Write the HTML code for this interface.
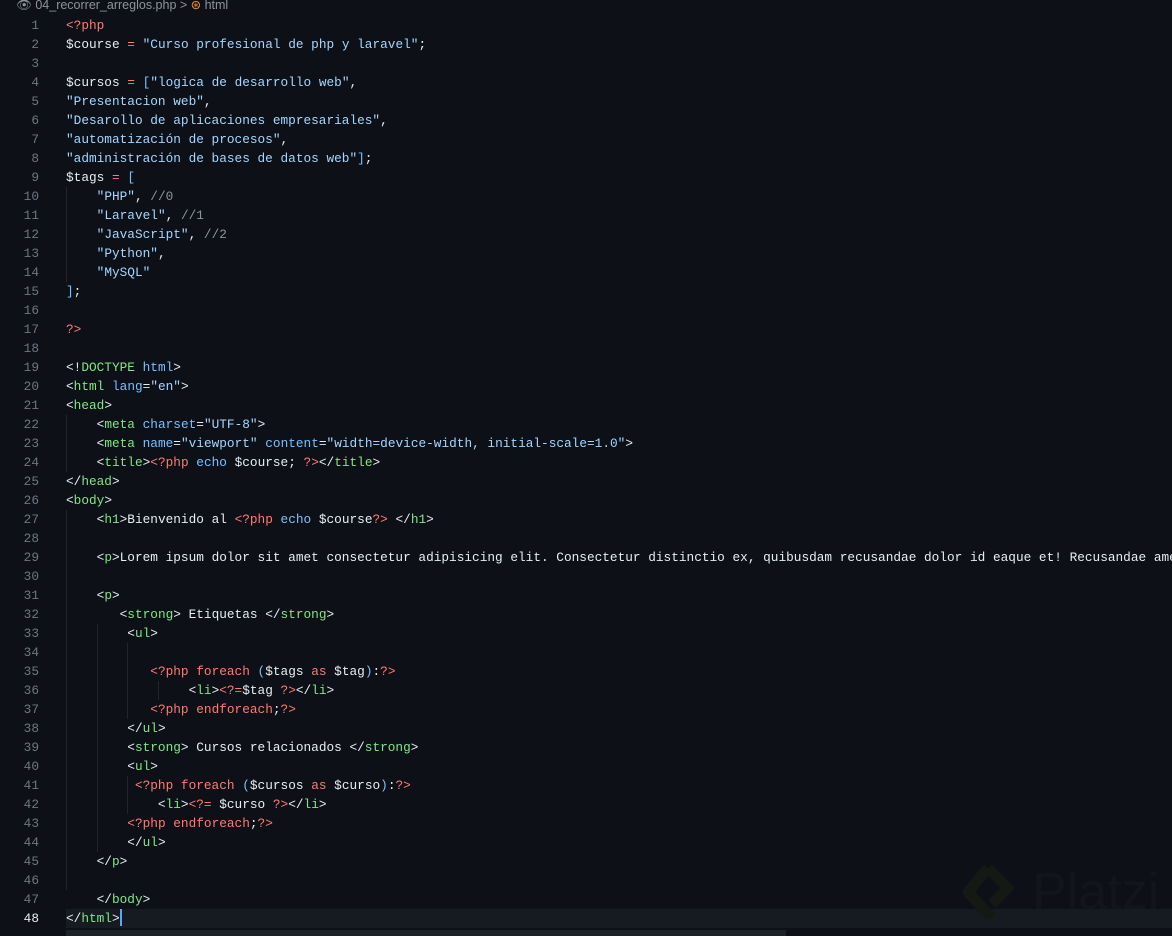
<!DOCTYPE html>
<html><head><style>
body{margin:0;background:#0d1117;width:1172px;height:936px;overflow:hidden;position:relative;font-family:"Liberation Mono",monospace;}
.hdr{position:absolute;left:16px;top:-3px;font-family:"Liberation Sans",sans-serif;font-size:12.5px;color:#8b949e;white-space:nowrap}
.code{position:absolute;left:0;top:15.5px;font-size:12.77px;line-height:19px;color:#e6edf3;white-space:pre}
.ln{display:inline-block;width:39px;text-align:right;color:#6e7681;margin-right:27px}
.cur .ln{color:#e6edf3}
.t{color:#7ee787}.s{color:#a5d6ff}.r{color:#ff7b72}.b{color:#79c0ff}.c{color:#8b949e}
.g{position:absolute;width:1px;background:#21262d}
</style></head><body>
<div class="hdr">👁 04_recorrer_arreglos.php &gt; <span style="color:#f0883e">⊛</span> html</div>
<div style="position:absolute;left:66px;top:909px;width:1106px;height:19px;background:#161b22"></div>
<div style="position:absolute;left:66px;top:930px;width:720px;height:6px;background:#1c2128"></div>
<div class="g" style="left:66px;top:187px;height:95px"></div>
<div class="g" style="left:66px;top:415px;height:57px"></div>
<div class="g" style="left:66px;top:510px;height:380px"></div>
<div class="g" style="left:97px;top:624px;height:228px"></div>
<div class="g" style="left:127px;top:643px;height:76px"></div>
<div class="g" style="left:127px;top:776px;height:38px"></div>
<div class="g" style="left:158px;top:681px;height:19px"></div>
<svg style="position:absolute;left:962px;top:862px" width="52" height="64" viewBox="0 0 52 64"><path d="M26 6 L46 26 L30 42 M26 6 L6 30 L26 52 L30 48" stroke="#141914" stroke-width="11" fill="none" stroke-linejoin="round"/></svg>
<div style="position:absolute;left:1032px;top:862px;font-family:'Liberation Sans',sans-serif;font-size:52px;color:#12161b">Platzi</div>
<div class="code"><div><span class="ln">1</span><span class="r">&lt;?php</span></div><div><span class="ln">2</span>$course <span class="r">=</span> <span class="s">"Curso profesional de php y laravel"</span>;</div><div><span class="ln">3</span></div><div><span class="ln">4</span>$cursos <span class="r">=</span> <span class="b">[</span><span class="s">"logica de desarrollo web"</span>,</div><div><span class="ln">5</span><span class="s">"Presentacion web"</span>,</div><div><span class="ln">6</span><span class="s">"Desarollo de aplicaciones empresariales"</span>,</div><div><span class="ln">7</span><span class="s">"automatización de procesos"</span>,</div><div><span class="ln">8</span><span class="s">"administración de bases de datos web"</span><span class="b">]</span>;</div><div><span class="ln">9</span>$tags <span class="r">=</span> <span class="b">[</span></div><div><span class="ln">10</span>    <span class="s">"PHP"</span>, <span class="c">//0</span></div><div><span class="ln">11</span>    <span class="s">"Laravel"</span>, <span class="c">//1</span></div><div><span class="ln">12</span>    <span class="s">"JavaScript"</span>, <span class="c">//2</span></div><div><span class="ln">13</span>    <span class="s">"Python"</span>,</div><div><span class="ln">14</span>    <span class="s">"MySQL"</span></div><div><span class="ln">15</span><span class="b">]</span>;</div><div><span class="ln">16</span></div><div><span class="ln">17</span><span class="r">?&gt;</span></div><div><span class="ln">18</span></div><div><span class="ln">19</span>&lt;!<span class="t">DOCTYPE</span> <span class="b">html</span>&gt;</div><div><span class="ln">20</span>&lt;<span class="t">html</span> <span class="b">lang</span>=<span class="s">"en"</span>&gt;</div><div><span class="ln">21</span>&lt;<span class="t">head</span>&gt;</div><div><span class="ln">22</span>    &lt;<span class="t">meta</span> <span class="b">charset</span>=<span class="s">"UTF-8"</span>&gt;</div><div><span class="ln">23</span>    &lt;<span class="t">meta</span> <span class="b">name</span>=<span class="s">"viewport"</span> <span class="b">content</span>=<span class="s">"width=device-width, initial-scale=1.0"</span>&gt;</div><div><span class="ln">24</span>    &lt;<span class="t">title</span>&gt;<span class="r">&lt;?php</span> <span class="b">echo</span> $course; <span class="r">?&gt;</span>&lt;/<span class="t">title</span>&gt;</div><div><span class="ln">25</span>&lt;/<span class="t">head</span>&gt;</div><div><span class="ln">26</span>&lt;<span class="t">body</span>&gt;</div><div><span class="ln">27</span>    &lt;<span class="t">h1</span>&gt;Bienvenido al <span class="r">&lt;?php</span> <span class="b">echo</span> $course<span class="r">?&gt;</span> &lt;/<span class="t">h1</span>&gt;</div><div><span class="ln">28</span></div><div><span class="ln">29</span>    &lt;<span class="t">p</span>&gt;Lorem ipsum dolor sit amet consectetur adipisicing elit. Consectetur distinctio ex, quibusdam recusandae dolor id eaque et! Recusandae amet</div><div><span class="ln">30</span></div><div><span class="ln">31</span>    &lt;<span class="t">p</span>&gt;</div><div><span class="ln">32</span>       &lt;<span class="t">strong</span>&gt; Etiquetas &lt;/<span class="t">strong</span>&gt;</div><div><span class="ln">33</span>        &lt;<span class="t">ul</span>&gt;</div><div><span class="ln">34</span></div><div><span class="ln">35</span>           <span class="r">&lt;?php foreach</span> <span class="b">(</span>$tags <span class="r">as</span> $tag<span class="b">)</span>:<span class="r">?&gt;</span></div><div><span class="ln">36</span>                &lt;<span class="t">li</span>&gt;<span class="r">&lt;?=</span>$tag <span class="r">?&gt;</span>&lt;/<span class="t">li</span>&gt;</div><div><span class="ln">37</span>           <span class="r">&lt;?php endforeach</span>;<span class="r">?&gt;</span></div><div><span class="ln">38</span>        &lt;/<span class="t">ul</span>&gt;</div><div><span class="ln">39</span>        &lt;<span class="t">strong</span>&gt; Cursos relacionados &lt;/<span class="t">strong</span>&gt;</div><div><span class="ln">40</span>        &lt;<span class="t">ul</span>&gt;</div><div><span class="ln">41</span>         <span class="r">&lt;?php foreach</span> <span class="b">(</span>$cursos <span class="r">as</span> $curso<span class="b">)</span>:<span class="r">?&gt;</span></div><div><span class="ln">42</span>            &lt;<span class="t">li</span>&gt;<span class="r">&lt;?=</span> $curso <span class="r">?&gt;</span>&lt;/<span class="t">li</span>&gt;</div><div><span class="ln">43</span>        <span class="r">&lt;?php endforeach</span>;<span class="r">?&gt;</span></div><div><span class="ln">44</span>        &lt;/<span class="t">ul</span>&gt;</div><div><span class="ln">45</span>    &lt;/<span class="t">p</span>&gt;</div><div><span class="ln">46</span></div><div><span class="ln">47</span>    &lt;/<span class="t">body</span>&gt;</div><div class="cur"><span class="ln">48</span>&lt;/<span class="t">html</span>&gt;<span style="display:inline-block;width:2px;height:17px;background:#58a6ff;vertical-align:-4px"></span></div></div>
</body></html>
